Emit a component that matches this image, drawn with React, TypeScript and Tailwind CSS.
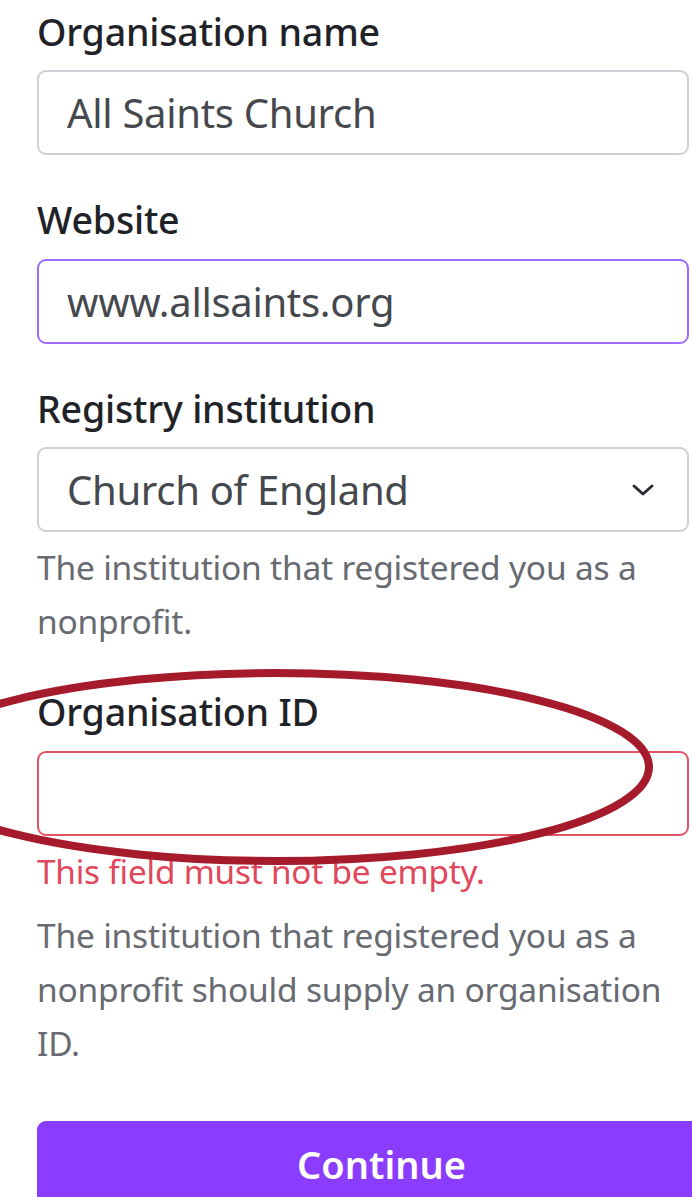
import React from "react";

const font = { fontFamily: '"Noto Sans", "Open Sans", Arial, sans-serif' };

function Label({ children, className = "" }: { children: React.ReactNode; className?: string }) {
  return (
    <div className={`text-[37.6px] leading-[40px] font-medium text-[#1f2328] tracking-[-0.2px] ${className}`}>
      {children}
    </div>
  );
}

function Chevron() {
  return (
    <svg width="24" height="14" viewBox="0 0 24 14" fill="none" className="shrink-0">
      <path d="M3 3 L12 11 L21 3" stroke="#2b2e33" strokeWidth="3" strokeLinecap="round" strokeLinejoin="round" />
    </svg>
  );
}

export default function App() {
  return (
    <div className="relative w-full h-[1197px] overflow-hidden bg-white" style={font}>
      <div className="flex flex-col pl-[37px] pr-[3px] pt-[12px]">
        {/* Organisation name */}
        <Label>Organisation name</Label>
        <div className="mt-[18px] h-[85px] rounded-[9px] border-2 border-[#cdd0d4] flex items-center px-[28px] text-[40px] text-[#45484d] tracking-[-0.3px]">
          All Saints Church
        </div>

        {/* Website */}
        <Label className="mt-[45px]">Website</Label>
        <div className="mt-[19px] h-[85px] rounded-[9px] border-2 border-[#9d6bff] flex items-center px-[28px] text-[40px] text-[#45484d] tracking-[-0.3px]">
          www.allsaints.org
        </div>

        {/* Registry institution */}
        <Label className="mt-[45px]">Registry institution</Label>
        <div className="mt-[18px] h-[85px] rounded-[9px] border-2 border-[#cdd0d4] flex items-center justify-between pl-[28px] pr-[32px] text-[40px] text-[#45484d] tracking-[-0.3px]">
          <span>Church of England</span>
          <Chevron />
        </div>
        <p className="mt-[8px] text-[33.5px] leading-[54px] text-[#676a70] tracking-[-0.2px]">
          The institution that registered you as a nonprofit.
        </p>

        {/* Organisation ID */}
        <Label className="mt-[44px]">Organisation ID</Label>
        <div className="mt-[19px] h-[85px] rounded-[9px] border-2 border-[#e25465]" />
        <p className="mt-[14px] text-[33.3px] leading-[42px] text-[#e0475a] tracking-[-0.2px]">
          This field must not be empty.
        </p>
        <p className="mt-[16px] text-[33.5px] leading-[54px] text-[#676a70] tracking-[-0.2px]">
          The institution that registered you as a nonprofit should supply an organisation ID.
        </p>

        <button className="mt-[51px] -mr-[37px] h-[100px] rounded-t-[9px] bg-[#8a3cff] text-white text-[38px] leading-[52px] font-semibold flex items-start justify-center pt-[17px]">
          Continue
        </button>
      </div>

      {/* hand-drawn highlight around the empty field */}
      <svg className="absolute left-0 top-0 pointer-events-none" width="692" height="1197" viewBox="0 0 692 1197">
        <ellipse cx="276" cy="767" rx="373" ry="94" fill="none" stroke="#a61b2b" strokeWidth="8" />
      </svg>
    </div>
  );
}
